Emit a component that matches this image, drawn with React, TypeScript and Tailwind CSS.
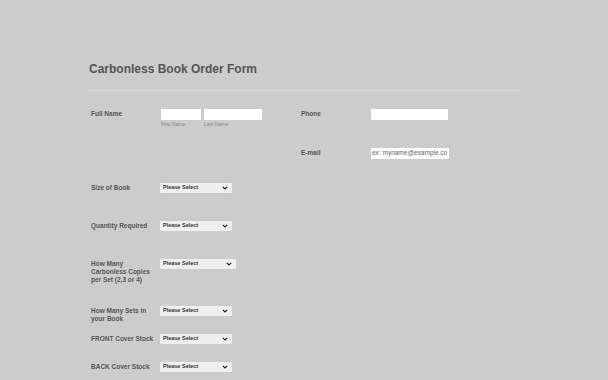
import React from "react";

const font = { fontFamily: '"Liberation Sans", Arial, sans-serif' };

function Select({ w = "w-[72px]" }: { w?: string }) {
  return (
    <div className={`${w} h-[10px] bg-[#efefef] flex items-center justify-between pl-[3px] pr-[3px] rounded-[1px]`}>
      <span className="text-[5.5px] leading-none font-bold text-[#333]">Please Select</span>
      <svg width="6" height="4" viewBox="0 0 6 4" className="mr-[1px]">
        <path d="M0.8 0.8 L3 3 L5.2 0.8" fill="none" stroke="#222" strokeWidth="1.2" />
      </svg>
    </div>
  );
}

function Label({ children, w = "w-[71px]" }: { children: React.ReactNode; w?: string }) {
  return (
    <div className={`${w} shrink-0 pl-[2px] pr-[4px] text-[6.5px] leading-[8px] font-bold text-[#565656]`}>
      {children}
    </div>
  );
}

export default function App() {
  return (
    <div className="w-[608px] h-[380px] bg-[#cccccc] overflow-hidden" style={font}>
      <div className="ml-[89px] w-[430px] pt-[61px]">
        <h1 className="text-[12px] leading-[16px] font-bold text-[#555555]">Carbonless Book Order Form</h1>
        <div className="mt-[13px] h-px bg-[#d9d9d9]" />
        <div className="mt-[18px] flex">
          <div className="w-[210px] flex">
            <Label w="w-[72px]">
              <div className="pt-[1px]">Full Name</div>
            </Label>
            <div className="flex gap-[3px]">
              <div className="flex flex-col">
                <div className="w-[40px] h-[11px] bg-white" />
                <span className="mt-[1px] text-[5px] leading-[6px] text-[#8a8a8a]">First Name</span>
              </div>
              <div className="flex flex-col">
                <div className="w-[58px] h-[11px] bg-white" />
                <span className="mt-[1px] text-[5px] leading-[6px] text-[#8a8a8a]">Last Name</span>
              </div>
            </div>
          </div>
          <div className="w-[210px] flex">
            <Label w="w-[72px]">
              <div className="pt-[1px]">Phone</div>
            </Label>
            <div className="w-[77px] h-[11px] bg-white" />
          </div>
        </div>
        <div className="mt-[21px] flex h-[35px]">
          <div className="w-[210px]" />
          <div className="w-[210px] flex">
            <Label w="w-[72px]">
              <div className="pt-[1px]">E-mail</div>
            </Label>
            <div className="w-[78px] h-[11px] bg-white flex items-center pl-[1px] overflow-hidden">
              <span className="text-[6.5px] leading-none text-[#666] whitespace-nowrap">ex: myname@example.co</span>
            </div>
          </div>
        </div>
        <div className="flex h-[38px]">
          <Label>
            <div className="pt-[1px]">Size of Book</div>
          </Label>
          <Select />
        </div>
        <div className="flex h-[38px]">
          <Label>
            <div className="pt-[1px]">Quantity Required</div>
          </Label>
          <Select />
        </div>
        <div className="flex h-[47px]">
          <Label>
            <div className="pt-[1px]">How Many Carbonless Copies per Set (2,3 or 4)</div>
          </Label>
          <Select w="w-[76px]" />
        </div>
        <div className="flex h-[28px]">
          <Label>
            <div className="pt-[1px]">How Many Sets in your Book</div>
          </Label>
          <Select />
        </div>
        <div className="flex h-[28px]">
          <Label>
            <div className="pt-[1px]">FRONT Cover Stock</div>
          </Label>
          <Select />
        </div>
        <div className="flex h-[28px]">
          <Label>
            <div className="pt-[1px]">BACK Cover Stock</div>
          </Label>
          <Select />
        </div>
      </div>
    </div>
  );
}
